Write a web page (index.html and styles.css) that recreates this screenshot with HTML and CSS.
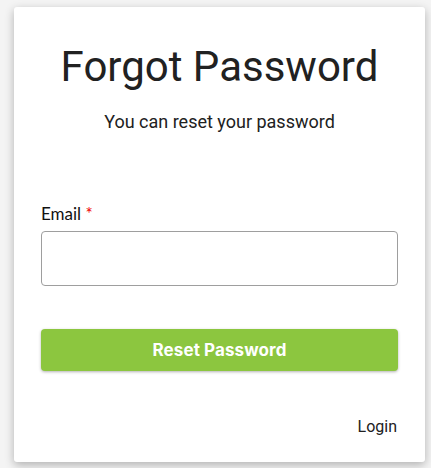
FILE: index.html
```html
<!DOCTYPE html>
<html>
<head>
<meta charset="utf-8">
<link rel="stylesheet" href="styles.css">
</head>
<body>
<div class="card">
  <h1 class="title">Forgot Password</h1>
  <p class="subtitle">You can reset your password</p>
  <form class="form">
    <label class="label" for="email">Email <span class="req">*</span></label>
    <input class="input" id="email" type="email">
    <button class="btn" type="button">Reset Password</button>
  </form>
  <div class="footer"><a class="login" href="#">Login</a></div>
</div>
</body>
</html>
```
FILE: styles.css
```css
html, body { margin: 0; padding: 0; }
body {
  background: #f4f4f4;
  padding: 7px 6px 6px 14px;
  font-family: Roboto, "Liberation Sans", sans-serif;
}
.card {
  box-sizing: border-box;
  width: 411px;
  height: 455px;
  background: #fff;
  border-radius: 3px;
  box-shadow: 0 3px 10px rgba(0,0,0,0.28);
  padding: 0 27px;
  display: flex;
  flex-direction: column;
}
.title {
  margin: 35px 0 0;
  font-weight: 400;
  font-size: 42px;
  line-height: 50px;
  text-align: center;
  color: #212121;
}
.subtitle {
  margin: 18px 0 0;
  font-size: 18px;
  line-height: 24px;
  text-align: center;
  color: #212121;
}
.form {
  display: flex;
  flex-direction: column;
  margin-top: 70px;
}
.label {
  font-family: Lato, sans-serif;
  font-size: 17px;
  line-height: 20px;
  color: #111;
}
.req { color: #e00; }
.input {
  box-sizing: border-box;
  margin-top: 7px;
  height: 55px;
  border: 1px solid #9e9e9e;
  border-radius: 4px;
  outline: none;
}
.btn {
  margin-top: 43px;
  height: 42px;
  border: none;
  border-radius: 4px;
  background: #8cc63f;
  color: #fff;
  font-family: Inter, sans-serif;
  font-weight: 700;
  font-size: 17px;
  letter-spacing: 0.1px;
  box-shadow: 0 1px 3px rgba(0,0,0,0.3);
}
.footer {
  margin-top: 46px;
  text-align: right;
}
.login {
  font-size: 16px;
  color: #212121;
  text-decoration: none;
  margin-right: 1px;
}
```
